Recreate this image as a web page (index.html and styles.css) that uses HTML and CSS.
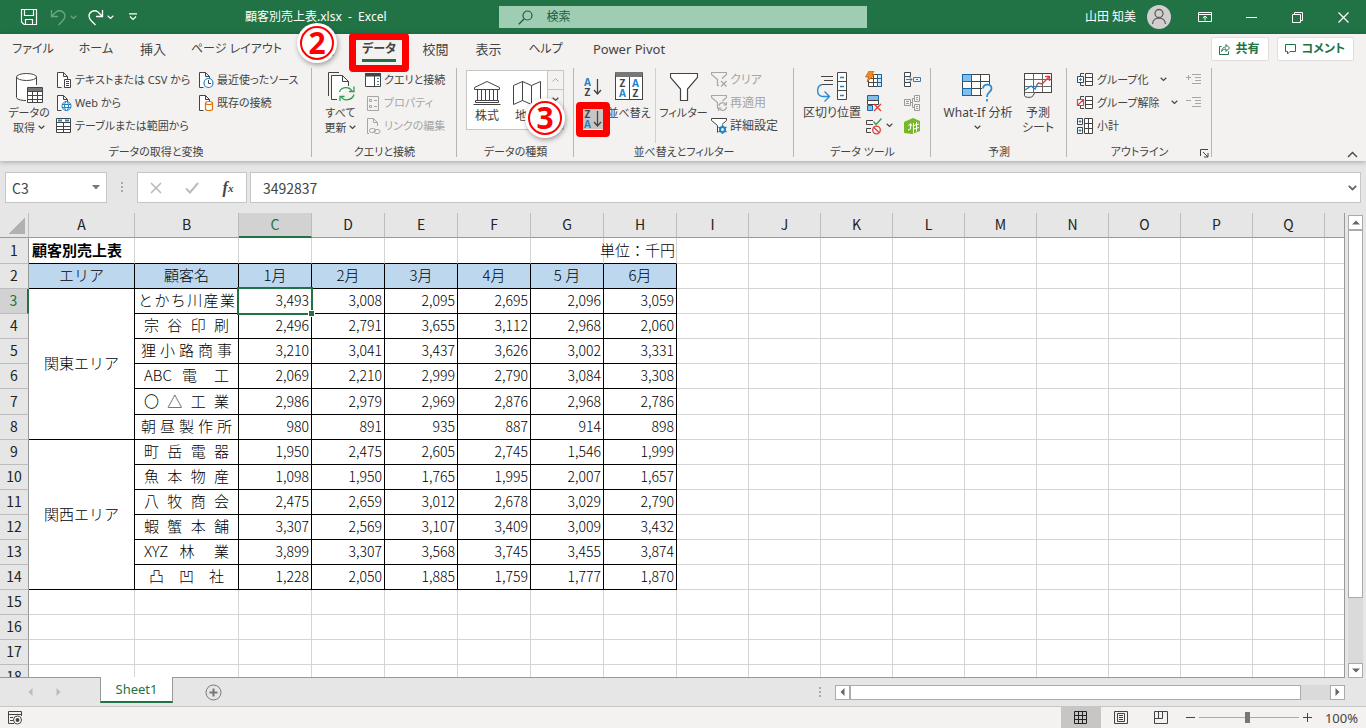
FILE: index.html
```html
<!DOCTYPE html>
<html lang="ja">
<head>
  <meta charset="UTF-8" />
  <meta name="viewport" content="width=device-width, initial-scale=1" />
  <title>顧客別売上表.xlsx - Excel</title>
  <link rel="stylesheet" href="styles.css">
</head>
<body>
  <svg class="defs" width="0" height="0" aria-hidden="true">
    <symbol id="chev" viewBox="0 0 7 5"><path d="M.7 .8L3.5 3.5L6.3 .8" fill="none" stroke="currentColor" stroke-width="1.2"/></symbol>
    <symbol id="doc" viewBox="0 0 16 18"><path d="M5.500 16.500H1.500V1.500H7.500L11.500 5.500V8M7.500 1.500V5.500H11.500" fill="#fff" stroke="#444"/></symbol>
  </svg>

  <header class="titlebar">
    <div class="quick">
      <button class="save" aria-label="上書き保存"><svg width="18" height="18"><path d="M1.500 1.500H16.500V16.500H4L1.500 14zM4.500 1.500V7.500H13.500V1.500M5.500 16.500V11.500H12.500V16.500" fill="none" stroke="#fff" stroke-width="1.2"/></svg></button>
      <button class="faded undo" aria-label="元に戻す"><svg width="17" height="17"><path d="M1.500 1V7.500H8M1.500 7.500L6 3C10 0 15 3 15 7C15 9 14 10.500 12.500 12L8.500 16" fill="none" stroke="#fff" stroke-width="1.3"/></svg><svg class="chev"><use href="#chev"/></svg></button>
      <button class="redo" aria-label="やり直し"><svg width="17" height="17"><path d="M15.500 1V7.500H9M15.500 7.500L11 3C7 0 2 3 2 7C2 9 3 10.500 4.500 12L8.500 16" fill="none" stroke="#fff" stroke-width="1.3"/></svg><svg class="chev"><use href="#chev"/></svg></button>
      <button class="custom" aria-label="カスタマイズ"><svg width="8" height="8"><path d="M0 .8H8M1 3.500L4 6.500L7 3.500" fill="none" stroke="#fff" stroke-width="1.2"/></svg></button>
      <span class="filename">顧客別売上表.xlsx&nbsp; -&nbsp; Excel</span>
    </div>
    <label class="search">
      <svg width="15" height="15"><circle cx="9.500" cy="5.500" r="4.500" fill="none" stroke="#1c5e3a" stroke-width="1.200"/><path d="M6.200 8.800L.8 14.200" stroke="#1c5e3a" stroke-width="1.300"/></svg>
      <input type="text" placeholder="検索">
    </label>
    <div class="account">
      <span>山田 知美</span>
      <svg class="avatar" width="24" height="24"><circle cx="12" cy="12" r="12" fill="#d2d0ce"/><circle cx="12" cy="8.500" r="4" fill="none" stroke="#605e5c" stroke-width="1.300"/><path d="M5.500 19C6 11 18 11 18.500 19" fill="none" stroke="#605e5c" stroke-width="1.300"/></svg>
      <button aria-label="リボンの表示オプション"><svg width="14" height="12"><path d="M.5 1.500H13.500V10.500H.5zM.5 3.500H13.500M7 9.500V5M4.800 7L7 5L9.200 7" fill="none" stroke="#fff"/></svg></button>
      <button aria-label="最小化"><svg width="11" height="11"><path d="M0 5.500H11" stroke="#fff"/></svg></button>
      <button aria-label="元に戻す (縮小)"><svg width="11" height="11"><path d="M.5 2.500H8.500V10.500H.5zM2.500 2.500V.5H10.500V8.500H8.500" fill="none" stroke="#fff"/></svg></button>
      <button aria-label="閉じる"><svg width="11" height="11"><path d="M.5 .5L10.500 10.500M10.500 .5L.5 10.500" stroke="#fff" stroke-width="1.200"/></svg></button>
    </div>
  </header>

  <section class="ribbon">
    <div class="tabrow">
      <nav class="tabs">
        <a href="#" class="kana">ファイル</a>
        <a href="#" class="kana">ホーム</a>
        <a href="#">挿入</a>
        <a href="#" class="kana">ページ レイアウト</a>
        <a href="#">数式</a>
        <div class="step step-tab"><a href="#" class="active kana">データ</a><i class="frame"></i><b class="num">2</b></div>
        <a href="#">校閲</a>
        <a href="#">表示</a>
        <a href="#" class="kana">ヘルプ</a>
        <a href="#">Power Pivot</a>
      </nav>
      <div class="share">
        <button><svg width="13" height="12"><path d="M3.500 3.500H1.500V11.500H10.500V8.500M3.500 8.500C4 5 6 4 8 4V1.500L11.500 5L8 8.500V6C6 6 4.500 7 3.500 8.500z" fill="none" stroke="#217346"/></svg>共有</button>
        <button><svg width="13" height="12"><path d="M1.500 1.500H11.500V8.500H6L3.500 11V8.500H1.500z" fill="none" stroke="#217346"/></svg>コメント</button>
      </div>
    </div>

    <div class="groups">
      <div class="group g-get">
        <div class="items">
          <button class="big">
            <svg width="28" height="31"><path d="M1.500 5V25.500C1.500 27 5 28.500 12 28.500V14.500H21.500V5" fill="#fff"/><path d="M1.500 5V25.500C1.500 27 5 28.500 11 28.500M21.500 5V13" fill="none" stroke="#444"/><ellipse cx="11.500" cy="5" rx="10" ry="3.500" fill="#fff" stroke="#444"/><path d="M12.500 15.500H27.500V30.500H12.500z" fill="#fff" stroke="#444"/><path d="M13 16H27V19H13z" fill="#777"/><path d="M12.500 19.500H27.500M12.500 23.500H27.500M12.500 27.500H27.500M17.500 19V30.500M22.500 19V30.500" stroke="#444"/></svg>
            <span>データの<br>取得 <svg class="chev"><use href="#chev"/></svg></span>
          </button>
          <div class="col">
            <button class="small"><svg width="16" height="18"><use href="#doc"/><path d="M8.500 8.500H14.500V16.500H8.500z" fill="#fff" stroke="#444"/><path d="M10 10.500H13M10 12.500H13M10 14.500H13" stroke="#444"/></svg>テキストまたは CSV から</button>
            <button class="small"><svg width="16" height="18"><use href="#doc"/><circle cx="10.500" cy="12" r="4.500" fill="#fff" stroke="#1f84c4"/><ellipse cx="10.500" cy="12" rx="2" ry="4.500" fill="none" stroke="#1f84c4"/><path d="M6 10.500H15M6 13.500H15" stroke="#1f84c4"/></svg>Web から</button>
            <button class="small"><svg width="16" height="18"><path d="M.5 1.500H14.500V15.500H.5z" fill="#fff" stroke="#444"/><path d="M.5 5.500H14.500M.5 9.500H14.500M.5 12.500H14.500M7.500 5.500V15.500" stroke="#444"/><path d="M2 3.500H6M9 3.500H13" stroke="#1f84c4" stroke-width="2"/></svg>テーブルまたは範囲から</button>
          </div>
          <div class="col">
            <button class="small"><svg width="16" height="18"><use href="#doc"/><circle cx="10.500" cy="12" r="4.500" fill="#fff" stroke="#1f84c4" stroke-width="1.200"/><path d="M10.500 9V12.500H13" fill="none" stroke="#444"/></svg>最近使ったソース</button>
            <button class="small"><svg width="16" height="18"><use href="#doc"/><path d="M7.500 9V15C7.500 17 14.500 17 14.500 15V9" fill="#fff" stroke="#e07000" stroke-width="1.200"/><ellipse cx="11" cy="9" rx="3.500" ry="1.500" fill="#fff" stroke="#e07000" stroke-width="1.200"/></svg>既存の接続</button>
          </div>
        </div>
        <div class="caption">データの取得と変換</div>
      </div>

      <div class="group g-conn">
        <div class="items">
          <button class="big">
            <svg width="28" height="31"><path d="M1.500 24V.5H12" fill="none" stroke="#444"/><path d="M10 27.500H4.500V3.500H15.500L21.500 9.500V14M15.500 3.500V9.500H21.500" fill="#fff" stroke="#444"/><path d="M12.500 20C14 15 22 13.500 25.500 19.500M27 14.500V19.500H22M27 22.500C25.500 28 17 30 14 24.500M13 29V24.500H17.500" fill="none" stroke="#2f9e4f" stroke-width="1.300"/></svg>
            <span>すべて<br>更新 <svg class="chev"><use href="#chev"/></svg></span>
          </button>
          <div class="col">
            <button class="small"><svg width="16" height="18"><path d="M.5 2.500H15.500V15.500H.5z" fill="#fff" stroke="#444"/><path d="M0 4H16" stroke="#444" stroke-width="3"/><path d="M9.500 5V15.500" stroke="#444"/><path d="M12 7.500H14M12 10.500H14M12 13.500H14" stroke="#1f84c4"/></svg>クエリと接続</button>
            <button class="small" disabled><svg width="16" height="18"><path d="M2.500 2.500H13.500V16.500H2.500z" fill="none" stroke="#a6a6a6"/><path d="M4.500 5.500H6.500V7.500H4.500zM4.500 11.500H6.500V13.500H4.500zM9 6.500H12M9 12.500H12" fill="none" stroke="#a6a6a6"/></svg>プロパティ</button>
            <button class="small" disabled><svg width="16" height="18"><path d="M4 16.500H2.500V1.500H8.500L12.500 5.500V9M8.500 1.500V5.500H12.500" fill="none" stroke="#a6a6a6"/><rect x="4.500" y="11.500" width="6" height="4" rx="2" fill="none" stroke="#a6a6a6"/><rect x="9" y="12.500" width="6" height="4" rx="2" fill="none" stroke="#a6a6a6"/></svg>リンクの編集</button>
          </div>
        </div>
        <div class="caption">クエリと接続</div>
      </div>

      <div class="group g-types">
        <div class="items">
          <div class="gallery">
            <button><svg width="28" height="26"><path d="M1.500 7.500L14 1.500L26.500 7.500V9.500H1.500zM4.500 10V20M8.500 10V20M12.500 10V20M16.500 10V20M20.500 10V20M24.500 10V20M2.500 20.500H25.500V22.500H2.500zM.5 24.500H27.500" fill="none" stroke="#444"/></svg>株式</button>
            <button><svg width="28" height="26"><path d="M.5 5.500L9.500 1.500L18.500 5.500L27.500 1.500V20.500L18.500 24.500L9.500 20.500L.5 24.500zM9.500 1.500V20.500M18.500 5.500V24.500" fill="none" stroke="#444"/></svg>地理</button>
            <div class="gscroll">
              <button aria-label="上へ"><svg width="7" height="4"><path d="M.5 3.500L3.500 .5L6.500 3.500" fill="none" stroke="#aaa"/></svg></button>
              <button aria-label="下へ"><svg class="chev"><use href="#chev"/></svg></button>
              <button aria-label="その他"><svg class="chev"><use href="#chev"/></svg></button>
            </div>
          </div>
        </div>
        <div class="caption">データの種類</div>
      </div>

      <div class="group g-sort">
        <div class="items">
          <div class="sorts">
            <button aria-label="昇順"><span class="az"><i>A</i>Z</span><svg width="9" height="18"><path d="M4.500 1V15.500M1 12L4.500 16L8 12" fill="none" stroke="#444" stroke-width="1.300"/></svg></button>
            <div class="step step-sort"><button class="pressed" aria-label="降順"><span class="az">Z<i>A</i></span><svg width="9" height="18"><path d="M4.500 1V15.500M1 12L4.500 16L8 12" fill="none" stroke="#444" stroke-width="1.300"/></svg></button><i class="frame"></i><b class="num">3</b></div>
          </div>
          <button class="big">
            <span class="sortbox"><span class="az">Z<i>A</i></span><span class="az"><i>A</i>Z</span></span>
            <span>並べ替え</span>
          </button>
          <button class="big filter">
            <svg width="28" height="31"><path d="M.5 1.500H27.500V5.500L17.500 17V28.500H10.500V17L.5 5.500z" fill="#fff" stroke="#444" stroke-width="1.200"/></svg>
            <span>フィルター</span>
          </button>
          <div class="col">
            <button class="small" disabled><svg width="16" height="18"><path d="M8 14.500H6.500V8.500L.5 3.500V1.500H15.500V3.500L11 7.500M10 10L15.500 15.500M15.500 10L10 15.500" fill="none" stroke="#a6a6a6" stroke-width="1.200"/></svg>クリア</button>
            <button class="small" disabled><svg width="16" height="18"><path d="M6.500 14.500V8.500L.5 3.500V1.500H15.500V3.500L11.500 7M8 12C8 8.500 13 7.500 14.500 10.500M15.500 8V11H12.500M15.500 13C15 17 10 17.500 8.500 14.500M7.500 17V14H10.500" fill="none" stroke="#a6a6a6" stroke-width="1.200"/></svg>再適用</button>
            <button class="small"><svg width="16" height="18"><path d="M6.500 15.500V8.500L.5 3.500V1.500H15.500V3.500L11 7.500" fill="#fff" stroke="#444"/><circle cx="11.500" cy="12.500" r="2.500" fill="none" stroke="#1f84c4" stroke-width="2"/><path d="M11.500 8V10M11.500 15V17M7.500 10.200L9.300 11.200M15.500 10.200L13.700 11.200M7.500 14.800L9.300 13.800M15.500 14.800L13.700 13.800" stroke="#1f84c4" stroke-width="1.500"/></svg>詳細設定</button>
          </div>
        </div>
        <div class="caption">並べ替えとフィルター</div>
      </div>

      <div class="group g-tools">
        <div class="items">
          <button class="big">
            <svg width="32" height="31"><path d="M5 4.500H17M8 8.500H17M5 12.500H17" stroke="#444"/><path d="M21.500 .5H30.500V27.500H21.500zM21.500 9.500H30.500M21.500 18.500H30.500" fill="#fff" stroke="#444"/><path d="M24 5.500H28M24 14.500H28M24 23.500H28" stroke="#1f84c4" stroke-width="1.500"/><path d="M6 12.500C0 14 0 24.500 7 24.500H13M8.500 19.500L13.500 24.500L8.500 29.500" fill="none" stroke="#2a8dd4" stroke-width="1.400"/></svg>
            <span>区切り位置</span>
          </button>
          <div class="col">
            <button class="small" aria-label="フラッシュ フィル"><svg width="18" height="18"><path d="M3.500 3.500H16.500V15.500H3.500zM3.500 7.500H16.500M3.500 11.500H16.500M8.500 3.500V15.500M12.500 3.500V15.500" fill="#fff" stroke="#444"/><path d="M12.500 3.500H16.500V15.500H12.500zM12.500 7.500H16.500M12.500 11.500H16.500" fill="#cfe6f7" stroke="#1068a8"/><path d="M4 0H9L7 3.500H9.500L2 11L3.500 6H.5z" fill="#f08a24" stroke="#c65f00" stroke-width=".7"/></svg></button>
            <button class="small" aria-label="重複の削除"><svg width="18" height="18"><path d="M2.500 1.500H13.500V6.500H2.500z" fill="#83beec" stroke="#1068a8"/><path d="M2.500 6.500H13.500V10.500H2.500z" fill="#fff" stroke="#444"/><path d="M2.500 11.500H7.500V16.500H2.500z" fill="#83beec" stroke="#1068a8"/><path d="M9 10L16 17M16 10L9 17" stroke="#e23c3c" stroke-width="1.400"/></svg></button>
            <button class="small" aria-label="データの入力規則"><svg width="18" height="18"><path d="M8 3.500H1.500V7.500H8M6 11.500H1.500V15.500H6" fill="none" stroke="#444"/><path d="M8.500 4.500L11 7.500L16.500 1.500" fill="none" stroke="#2f9e4f" stroke-width="1.300"/><circle cx="11.500" cy="13" r="3.800" fill="none" stroke="#e23c3c" stroke-width="1.300"/><path d="M9 10.500L14 15.500" stroke="#e23c3c" stroke-width="1.300"/></svg><svg class="chev"><use href="#chev"/></svg></button>
          </div>
          <div class="col">
            <button class="small" aria-label="統合"><svg width="18" height="18"><path d="M1.500 1.500H7.500V5.500H1.500zM1.500 11.500H7.500V15.500H1.500zM1.500 5.500V11.500" fill="#fff" stroke="#444"/><path d="M10.500 6.500H17.500V10.500H10.500zM3 8.500H9M6.500 6L9 8.500L6.500 11M13 8.500H15" fill="none" stroke="#1f84c4"/></svg></button>
            <button class="small" aria-label="リレーションシップ"><svg width="18" height="18"><path d="M1.500 5.500H7.500V11.500H1.500zM11.500 1.500H16.500V7.500H11.500zM11.500 10.500H16.500V16.500H11.500zM7.500 8.500H9.500V4.500H11.500M9.500 8.500V13.500H11.500M3 7.500H6M3 9.500H6M13 3.500H15M13 5.500H15M13 12.500H15M13 14.500H15" fill="none" stroke="#9a9a9a"/></svg></button>
            <button class="small" aria-label="データ モデルの管理"><svg width="18" height="18"><path d="M1 5L10 1L17 4V14L9 17L1 16z" fill="#76b82a"/><path d="M5 13L7.500 12V7M5.500 9L7.500 6.500L9 9M10.500 6V16M13.500 5V14.500M10.500 8.500L16 7M10.500 12L16 10.500" fill="none" stroke="#fff"/></svg></button>
          </div>
        </div>
        <div class="caption">データ ツール</div>
      </div>

      <div class="group g-fore">
        <div class="items">
          <button class="big">
            <svg width="32" height="31"><path d="M.5 2.500H27.500V23.500H.5z" fill="#fff" stroke="#444"/><path d="M.5 9.500H27.500M.5 16.500H27.500M9.500 2.500V23.500M18.500 2.500V23.500" stroke="#444"/><path d="M.5 2.500H9.500V9.500H.5zM.5 16.500H9.500V23.500H.5z" fill="#83beec" stroke="#1068a8"/><path d="M20 12H31V30H20z" fill="#f3f2f1"/><path d="M21 16.500C21.500 11 29.500 11.500 29.500 16.500C29.500 20 25 20 25 25M25 27V29.500" fill="none" stroke="#2a8dd4" stroke-width="1.800"/></svg>
            <span>What-If 分析<br><svg class="chev"><use href="#chev"/></svg></span>
          </button>
          <button class="big">
            <svg width="28" height="31"><path d="M.5 1.500H27.500V20.500H.5zM.5 7.500H27.500M.5 14.500H27.500M9.500 1.500V20.500M18.500 1.500V20.500" fill="#fff" stroke="#666"/><path d="M.5 20.500V23.500C.5 26 9 26 9 23.500L11 20.500H27.500V1.500H.5V20.500" fill="none" stroke="#444"/><path d="M1 18L7 14L11 17L14 11" fill="none" stroke="#1f84c4" stroke-width="1.400"/><path d="M14 11L18 12L25.500 4.500M21 4.500H25.500V9" fill="none" stroke="#e23c3c" stroke-width="1.400"/></svg>
            <span>予測<br>シート</span>
          </button>
        </div>
        <div class="caption">予測</div>
      </div>

      <div class="group g-out">
        <div class="items">
          <div class="col">
            <button class="small"><svg width="18" height="18"><path d="M9.500 2.500H16.500V14.500H9.500zM9.500 6.500H16.500M9.500 10.500H16.500M1.500 5.500H7.500V11.500H1.500zM4.500 5V2.500H8M4.500 12V14.500H8" fill="#fff" stroke="#444"/><path d="M3 8.500H6M4.500 7V10" stroke="#1f84c4"/></svg>グループ化 <svg class="chev"><use href="#chev"/></svg></button>
            <button class="small"><svg width="18" height="18"><path d="M9.500 2.500H16.500V14.500H9.500zM9.500 6.500H16.500M9.500 10.500H16.500M4.500 5V2.500H8M4.500 12V14.500H8" fill="#fff" stroke="#444"/><path d="M1.500 5.500H7.500V11.500H1.500zM1.500 11.500L7.500 5.500" fill="#fff" stroke="#e23c3c" stroke-width="1.200"/></svg>グループ解除 <svg class="chev"><use href="#chev"/></svg></button>
            <button class="small"><svg width="18" height="18"><path d="M8.500 1.500H16.500V16.500H8.500zM8.500 6.500H16.500M8.500 11.500H16.500M12.500 1.500V16.500M1.500 1.500H6.500V7.500H1.500zM1.500 10.500H6.500V16.500H1.500z" fill="#fff" stroke="#444"/><path d="M2.500 4.500H5.500M4 3V6M2.500 13.500H5.500M4 12V15" stroke="#1f84c4"/></svg>小計</button>
          </div>
          <div class="detail">
            <button class="small" disabled aria-label="詳細の表示"><svg width="16" height="18"><path d="M0 6.500H5M2.500 4V9M6 3.500H15M9 6.500H15M9 9.500H15M6 12.500H15" stroke="#a6a6a6"/></svg></button>
            <button class="small" disabled aria-label="詳細を表示しない"><svg width="16" height="18"><path d="M0 6.500H5M6 3.500H15M9 6.500H15M9 9.500H15M6 12.500H15" stroke="#a6a6a6"/></svg></button>
          </div>
        </div>
        <div class="caption">アウトライン</div>
        <button class="launcher" aria-label="アウトラインの設定"><svg width="9" height="9"><path d="M.5 7V.5H8M3 3L8 8M8 4V8H4" fill="none" stroke="#444"/></svg></button>
      </div>
      <button class="collapse" aria-label="リボンを折りたたむ"><svg width="11" height="7"><path d="M1 6L5.500 1.500L10 6" fill="none" stroke="#444" stroke-width="1.300"/></svg></button>
    </div>
  </section>

  <div class="formulabar">
    <div class="namebox"><input type="text" value="C3" aria-label="名前ボックス"><svg width="8" height="5"><path d="M0 0H8L4 4.500z" fill="#777"/></svg></div>
    <span class="grip"></span>
    <div class="fx">
      <button aria-label="キャンセル"><svg width="12" height="12"><path d="M1 1L11 11M11 1L1 11" stroke="#bbb" stroke-width="1.600"/></svg></button>
      <button aria-label="入力"><svg width="14" height="12"><path d="M1 6.500L5 10.500L13 1" fill="none" stroke="#bbb" stroke-width="2"/></svg></button>
      <button aria-label="関数の挿入"><em>f</em><small>x</small></button>
    </div>
    <div class="formula"><input type="text" value="3492837" aria-label="数式バー"><svg width="9" height="6"><path d="M.8 .8L4.500 4.500L8.200 .8" fill="none" stroke="#666" stroke-width="1.800"/></svg></div>
  </div>

  <main class="sheet">
    <div class="cells"><table id="grid"></table></div>
    <div class="vscroll">
      <button aria-label="上にスクロール"><svg width="8" height="5"><path d="M0 4.500H8L4 .5z" fill="#666"/></svg></button>
      <div class="track"><div class="thumb"></div></div>
      <button aria-label="下にスクロール"><svg width="8" height="5"><path d="M0 .5H8L4 4.500z" fill="#666"/></svg></button>
    </div>
  </main>

  <div class="sheetbar">
    <button class="nav" aria-label="前のシート"><svg width="5" height="8"><path d="M4.500 0V8L.5 4z" fill="#bbb"/></svg></button>
    <button class="nav" aria-label="次のシート"><svg width="5" height="8"><path d="M.5 0V8L4.500 4z" fill="#bbb"/></svg></button>
    <button class="sheettab">Sheet1</button>
    <button class="add" aria-label="新しいシート"><svg width="17" height="17"><circle cx="8.500" cy="8.500" r="7.500" fill="none" stroke="#777"/><path d="M4.500 8.500H12.500M8.500 4.500V12.500" stroke="#777" stroke-width="2"/></svg></button>
    <span class="grip"></span>
    <div class="hscroll">
      <button aria-label="左にスクロール"><svg width="5" height="8"><path d="M4.500 0V8L.5 4z" fill="#666"/></svg></button>
      <div class="track"><div class="thumb"></div></div>
      <button aria-label="右にスクロール"><svg width="5" height="8"><path d="M.5 0V8L4.500 4z" fill="#666"/></svg></button>
    </div>
  </div>

  <footer class="status">
    <button class="macro" aria-label="マクロの記録"><svg width="15" height="14"><path d="M6 12.500H.5V.5H13.500V5M.5 3.500H13.500M2 6.500H5M2 9.500H5" fill="none" stroke="#444"/><circle cx="9.500" cy="9" r="4" fill="#fff" stroke="#444"/><circle cx="9.500" cy="9" r="2" fill="#444"/></svg></button>
    <div class="views">
      <button class="on" aria-label="標準"><svg width="14" height="14"><path d="M.5 .5H12.500V12.500H.5zM4.500 .5V12.500M8.500 .5V12.500M.5 4.500H12.500M.5 8.500H12.500" fill="none" stroke="#222"/></svg></button>
      <button aria-label="ページ レイアウト"><svg width="14" height="14"><path d="M.5 .5H13.500V12.500H.5zM3.500 2.500H10.500V10.500H3.500zM5 4.500H9M5 6.500H9M5 8.500H9" fill="none" stroke="#444"/></svg></button>
      <button aria-label="改ページ プレビュー"><svg width="14" height="14"><path d="M.5 .5H13.500V12.500H.5zM.5 7.500H8.500V.5M4.500 .5V7.500" fill="none" stroke="#444"/></svg></button>
    </div>
    <button class="zoombtn" aria-label="縮小"><svg width="9" height="9"><path d="M0 4.500H9" stroke="#444"/></svg></button>
    <input type="range" min="10" max="190" value="98" aria-label="ズーム">
    <button class="zoombtn" aria-label="拡大"><svg width="9" height="9"><path d="M0 4.500H9M4.500 0V9" stroke="#444"/></svg></button>
    <span class="percent">100%</span>
  </footer>

  <script src="script.js"></script>
</body>
</html>
```
FILE: styles.css
```css
* { box-sizing: border-box; }

body {
  margin: 0; height: 100vh; overflow: hidden;
  display: flex; flex-direction: column;
  font-family: "Noto Sans", "Noto Sans CJK JP", sans-serif;
  font-size: 12px; line-height: 16px; color: #444; background: #e6e6e6;
  white-space: nowrap;
}

button {
  font: inherit; color: inherit; background: none; border: 0;
  padding: 0; margin: 0; cursor: pointer;
  display: flex; align-items: center; justify-content: center;
}

input { font: inherit; color: inherit; border: 0; background: none; outline: none; min-width: 0; }
a { color: inherit; text-decoration: none; }
svg { flex: none; }
.defs { position: absolute; }
.chev { width: 7px; height: 5px; }

/* title bar */
.titlebar { display: flex; height: 34px; flex: none; background: #217346; color: #fff; align-items: center; }
.quick { flex: 1; display: flex; align-items: center; }
.quick button { gap: 3px; }
.quick .save { margin-left: 20px; }
.quick .undo { margin-left: 12px; }
.quick .redo { margin-left: 10px; }
.quick .custom { margin-left: 15px; }
.faded { opacity: .35; }
.filename { margin-left: 108px; }
.search {
  width: 27%; height: 22px; background: #9fcdb3; color: #1c5e3a;
  display: flex; align-items: center; padding-left: 19px; gap: 12px;
}
.search input { flex: 1; }
.search input::placeholder { color: #1c5e3a; opacity: 1; }
.account { flex: 1; display: flex; align-items: center; justify-content: flex-end; }
.account .avatar { margin: 0 11px; }
.account button { width: 46px; height: 32px; }

/* ribbon */
.ribbon {
  flex: none; background: #f3f2f1; font-feature-settings: "palt";
  box-shadow: 0 1px 5px rgba(0,0,0,.3); position: relative;
}
.tabrow { display: flex; justify-content: space-between; height: 34px; }
.tabs {
  display: grid; font-size: 13px; line-height: 30px; text-align: center;
  grid-template-columns: 66px 60px 54px 113px 56px 60px 53px 53px 61px 106px;
}
.kana { font-size: 12px; }
.active { font-weight: bold; display: block; }
.active::after { content: ""; display: block; height: 3px; margin: -5px 13px 0; background: #217346; }
.share { display: flex; gap: 8px; padding: 3px 12px 0 0; }
.share button {
  height: 24px; background: #fff; border: 1px solid #e1dfdd; border-radius: 2px;
  color: #217346; font-weight: bold; padding: 0 8px 0 6px; gap: 5px;
}

.groups { display: flex; height: 93px; position: relative; }
.group { position: relative; display: flex; flex-direction: column; flex: none; }
.group::after { content: ""; position: absolute; right: 0; top: 0; bottom: 4px; width: 1px; background: #b8b6b4; }
.items { height: 76px; display: flex; }
.caption { text-align: center; font-size: 11px; line-height: 18px; }
.g-get { width: 312px; }
.g-conn { width: 145px; }
.g-types { width: 117px; }
.g-sort { width: 220px; }
.g-tools { width: 137px; }
.g-fore { width: 136px; }
.g-out { width: 145px; }

/* narrow labels, mostly kana */
.g-get .items, .g-conn .items, .g-out .items, .g-sort .big { font-size: 11px; }

.big { flex-direction: column; justify-content: flex-start; padding-top: 4px; gap: 2px; line-height: 15px; width: 54px; flex: none; }
.big .chev { margin-bottom: 2px; }
.col { display: flex; flex-direction: column; align-items: flex-start; flex: none; }
.small { height: 23px; gap: 3px; }
button:disabled { color: #a6a6a6; }

.g-get .big { margin-left: 2px; }
.g-get .col { width: 142px; }
.g-get .col:last-child { width: 110px; }
.g-conn .items { padding-left: 4px; }
.g-conn .big { width: 49px; }
.g-types .items { padding: 2px 0 0 9px; }
.gallery { display: flex; width: 98px; height: 60px; background: #fff; border: 1px solid #c8c6c4; }
.gallery > button { flex: 1; flex-direction: column; gap: 2px; padding-top: 4px; }
.gscroll { width: 16px; background: #f3f2f1; border-left: 1px solid #c8c6c4; display: flex; flex-direction: column; }
.gscroll button { flex: 1; border-bottom: 1px solid #c8c6c4; }
.g-sort .items { padding-left: 9px; }
.sorts { width: 20px; padding-top: 9px; display: flex; flex-direction: column; gap: 12px; }
.sorts button { width: 20px; height: 20px; gap: 2px; }
.pressed { background: #c8c6c4; }
.az { display: flex; flex-direction: column; font-size: 10px; line-height: 10px; font-weight: bold; }
.az i { font-style: normal; color: #1f84c4; }
.sortbox {
  display: flex; justify-content: space-around; width: 28px; height: 28px; margin: 0 0 3px;
  background: linear-gradient(#444, #444) center / 1px 100% no-repeat #fff;
  border: 1px solid #444; border-top: 5px solid #777; padding-top: 1px;
}
.g-sort .big { width: 52px; }
.g-sort .filter { width: 56px; border-left: 1px solid #d2d0ce; }
.g-tools .items { padding-left: 9px; }
.g-tools .big { width: 58px; margin-right: 4px; }
.g-tools .col { width: 38px; }
.g-fore .items { padding-left: 8px; }
.g-fore .big { width: 78px; }
.g-fore .big + .big { width: 42px; }
.g-out .items { padding-left: 9px; }
.g-out .col { width: 110px; }
.g-out .chev { margin-left: 8px; }
.launcher { position: absolute; right: 3px; bottom: 3px; }
.collapse { position: absolute; right: 8px; bottom: 3px; }

/* numbered step markers */
.step { position: relative; }
.frame { position: absolute; border: 7px solid #fe0000; border-radius: 4px; pointer-events: none; z-index: 2; }
.step-tab .frame { left: 0; right: 0; top: -1px; height: 39px; }
.step-sort .frame { left: -7px; right: -7px; top: -7px; height: 35px; }
.num {
  position: absolute; z-index: 3; width: 34px; height: 34px; border-radius: 50%;
  background: #fff; border: 2px solid #fe0000; color: #fe0000;
  box-shadow: 0 0 0 3px #fff, 1px 2px 5px 3px rgba(0,0,0,.35);
  font: bold 30px/29px "Open Sans", sans-serif; text-align: center;
}
.step-tab .num { left: -49px; top: -8px; }
.step-sort .num { left: -55px; top: -8px; }

/* formula bar */
.formulabar { flex: none; display: flex; padding: 11px 5px 10px; font-family: "Noto Sans CJK JP", sans-serif; font-size: 14px; }
.namebox, .fx, .formula { height: 31px; background: #fff; border: 1px solid #c6c6c6; display: flex; align-items: center; }
.namebox { width: 102px; padding: 0 6px; }
.namebox input { flex: 1; padding: 0; }
.grip { width: 2px; height: 11px; background: linear-gradient(#aaa 2px, transparent 2px) 0 0 / 2px 4px; }
.formulabar .grip { margin: 10px 14px; }
.fx { width: 110px; margin-right: 3px; }
.fx button { flex: 1; font-family: "Liberation Serif", serif; font-weight: bold; font-size: 16px; font-style: italic; }
.fx small { font-size: 11px; }
.formula { flex: 1; padding: 0 3px 0 12px; }
.formula input { flex: 1; padding: 0; }

/* grid */
.sheet { flex: 1; min-height: 0; display: flex; }
.cells { flex: 1; min-width: 0; overflow: hidden; background: #fff; border-right: 1px solid #999; border-bottom: 1px solid #999; }
table {
  table-layout: fixed; width: 0; border-collapse: separate; border-spacing: 0;
  font-family: "Noto Sans CJK JP", sans-serif; font-weight: 300; font-size: 15px; color: #000;
}
.w-head { width: 29px; }
.w-a { width: 106px; }
.w-b { width: 104px; }
.w-num { width: 73px; }
.w-rest { width: 72px; }
tr { height: 25px; }
tr.tall { height: 26px; }
td, th { padding: 0 0 2px; line-height: 20px; border-right: 1px solid #d4d4d4; border-bottom: 1px solid #d4d4d4; overflow: hidden; }
th { background: #e6e6e6; font-weight: normal; font-size: 14px; color: #222; border-color: #bdbdbd; }
thead th { border-bottom-color: #999; }
tbody th { border-right-color: #999; }
.corner { background: linear-gradient(135deg, transparent 50%, #b1b1b1 50%) 8px 4px / 17px 17px no-repeat #e6e6e6; }
thead .sel { background: #d2d2d2; color: #217346; border-bottom: 2px solid #217346; }
tbody .sel { background: #d2d2d2; color: #217346; border-right: 2px solid #217346; }
td.title { font-weight: bold; padding-left: 3px; }
td.unit { text-align: right; padding-right: 2px; overflow: visible; direction: rtl; }
.line { border-bottom-color: #000; }
.box { border-color: #000; text-align: center; }
.head { background: #bdd7ee; }
.name { text-align: justify; text-align-last: justify; padding: 0 9px 2px; }
.len3 { padding: 0 14px 2px; }
.len5 { padding: 0 6px 2px; }
.len6 { padding: 0 3px 2px; }
.val { text-align: right; font-size: 14px; padding-right: 2px; }
.cursor { position: relative; overflow: visible; }
.cursor::before { content: ""; position: absolute; inset: -2px; border: 2px solid #217346; }
.cursor::after { content: ""; position: absolute; right: -3px; bottom: -3px; width: 5px; height: 5px; background: #217346; outline: 1px solid #fff; }

/* scroll bars */
.vscroll { width: 21px; padding: 2px 3px 0; display: flex; flex-direction: column; }
.vscroll button, .hscroll button { width: 15px; height: 15px; background: #fff; border: 1px solid #ababab; flex: none; }
.track { flex: 1; background: #dadada; }
.thumb { background: #fff; border: 1px solid #ababab; }
.vscroll .thumb { height: 85%; }

.sheetbar { flex: none; height: 28px; display: flex; align-items: center; font-size: 13px; }
.nav { width: 28px; height: 24px; }
.nav:first-child { margin-left: 16px; }
.sheettab {
  width: 73px; height: 26px; margin-left: 28px; align-self: flex-start; margin-top: -1px;
  background: #fff; border: 1px solid #999; border-width: 0 1px; color: #217346;
  border-bottom: 2px solid #217346;
}
.add { margin: 0 auto 0 32px; }
.hscroll { width: 510px; display: flex; margin: 0 21px 0 14px; }
.hscroll .thumb { width: 94%; height: 15px; }

/* status bar */
.status { flex: none; height: 22px; display: flex; align-items: center; background: #f3f2f1; border-top: 1px solid #c6c6c6; }
.macro { margin: 0 auto 0 8px; }
.views { display: flex; height: 21px; margin-right: 5px; }
.views button { width: 40px; }
.views .on { background: #c8c6c4; }
.zoombtn { width: 9px; }
input[type=range] { -webkit-appearance: none; appearance: none; width: 100px; height: 11px; margin: 0 4px; background: linear-gradient(#aaa, #aaa) center / 100% 1px no-repeat; }
input[type=range]::-webkit-slider-thumb { -webkit-appearance: none; width: 5px; height: 11px; background: #777; }
.percent { margin: 0 8px 0 13px; font-size: 13px; }
```
FILE: script.js
```js
const months = ["1月", "2月", "3月", "4月", "5 月", "6月"];
const areas = [
  ["関東エリア", [
    ["とかち川産業", 3493, 3008, 2095, 2695, 2096, 3059],
    ["宗谷印刷", 2496, 2791, 3655, 3112, 2968, 2060],
    ["狸小路商事", 3210, 3041, 3437, 3626, 3002, 3331],
    ["ABC 電 工", 2069, 2210, 2999, 2790, 3084, 3308],
    ["〇 △ 工 業", 2986, 2979, 2969, 2876, 2968, 2786],
    ["朝昼製作所", 980, 891, 935, 887, 914, 898]
  ]],
  ["関西エリア", [
    ["町岳電器", 1950, 2475, 2605, 2745, 1546, 1999],
    ["魚本物産", 1098, 1950, 1765, 1995, 2007, 1657],
    ["八牧商会", 2475, 2659, 3012, 2678, 3029, 2790],
    ["蝦蟹本舗", 3307, 2569, 3107, 3409, 3009, 3432],
    ["XYZ 林 業", 3899, 3307, 3568, 3745, 3455, 3874],
    ["凸凹社", 1228, 2050, 1885, 1759, 1777, 1870]
  ]]
];

// only as many columns and rows as the window can show
const area0 = document.querySelector(".cells");
const extra = Math.max(1, Math.min(18, Math.ceil((area0.clientWidth - 677) / 72)));
const lastRow = Math.max(15, Math.ceil((area0.clientHeight - 27) / 25));

const letters = "ABCDEFGHIJKLMNOPQRSTUVWXYZ".slice(0, 8 + extra).split("");
const blank = "<td></td>".repeat(extra);

let html = '<colgroup><col class="w-head"><col class="w-a"><col class="w-b">' +
  '<col class="w-num">'.repeat(6) + '<col class="w-rest">'.repeat(extra) + "</colgroup>";

html += '<thead><tr><th class="corner"></th>' +
  letters.map(l => `<th class="${l === "C" ? "sel" : ""}">${l}</th>`).join("") + "</tr></thead><tbody>";

html += '<tr class="tall"><th>1</th><td class="title line">顧客別売上表</td>' +
  '<td class="line"></td>'.repeat(6) + `<td class="unit line">単位：千円</td>${blank}</tr>`;

html += '<tr><th>2</th><td class="box head">エリア</td><td class="box head">顧客名</td>' +
  months.map(m => `<td class="box head">${m}</td>`).join("") + blank + "</tr>";

let row = 3;
areas.forEach(([area, clients]) => {
  clients.forEach(([name, ...values], i) => {
    const len = name.includes(" ") ? "" : "len" + name.length;
    html += `<tr class="${row === 7 ? "tall" : ""}"><th class="${row === 3 ? "sel" : ""}">${row}</th>`;
    if (i === 0) html += `<td class="box" rowspan="${clients.length}">${area}</td>`;
    html += `<td class="box name ${len}">${name}</td>`;
    html += values.map((v, c) =>
      `<td class="box val ${row === 3 && c === 0 ? "cursor" : ""}">${v.toLocaleString("en-US")}</td>`).join("");
    html += blank + "</tr>";
    row++;
  });
});

for (; row <= lastRow; row++) {
  html += `<tr><th>${row}</th>${"<td></td>".repeat(8)}${blank}</tr>`;
}

document.getElementById("grid").innerHTML = html + "</tbody>";
```
